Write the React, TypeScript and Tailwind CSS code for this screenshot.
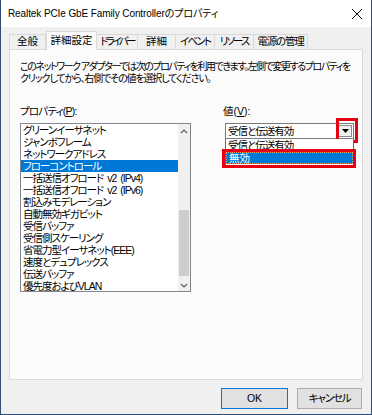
import React from "react";

const rows = [
  "グリーンイーサネット",
  "ジャンボフレーム",
  "ネットワークアドレス",
  "フローコントロール",
  "一括送信オフロード v2 (IPv4)",
  "一括送信オフロード v2 (IPv6)",
  "割込みモデレーション",
  "自動無効ギガビット",
  "受信バッファ",
  "受信側スケーリング",
  "省電力型イーサネット(EEE)",
  "速度とデュプレックス",
  "伝送バッファ",
  "優先度およびVLAN",
];

const tabs = [
  { label: "全般", w: "w-[37px]", t: "" },
  { label: "詳細設定", w: "w-[51px]", t: "", active: true },
  { label: "ドライバー", w: "w-[41px]", t: "tracking-[-2.6px]" },
  { label: "詳細", w: "w-[38px]", t: "" },
  { label: "イベント", w: "w-[39px]", t: "tracking-[-1.8px]" },
  { label: "リソース", w: "w-[39px]", t: "tracking-[-2px]" },
  { label: "電源の管理", w: "w-[54px]", t: "tracking-[-1.2px]" },
];

const font = "font-['Liberation_Sans','Noto_Sans_CJK_JP',sans-serif] [font-feature-settings:'palt']";

const App = () => {
  return (
    <div
      className={`w-[372px] h-[415px] bg-[#f0f0f0] border-x border-b border-[#2f4d74] flex flex-col text-[#000] ${font}`}
    >
      {/* title bar */}
      <div className="h-[27px] bg-white flex items-center justify-between pl-[7px] pr-[8px]">
        <span className="text-[10px] tracking-[-0.1px]">Realtek PCIe GbE Family Controllerのプロパティ</span>
        <svg width="12" height="12" viewBox="0 0 12 12">
          <path d="M1 1 L11 11 M11 1 L1 11" stroke="#111" strokeWidth="1" />
        </svg>
      </div>

      {/* tabs */}
      <div className="h-[22px] px-[8px] flex items-end">
        {tabs.map((t) =>
          t.active ? (
            <div
              key={t.label}
              className={`${t.w} h-[19px] -mb-px relative z-10 bg-[#fbfbfb] border-x border-t border-[#d9d9d9] flex items-center justify-center text-[10.5px]`}
            >
              {t.label}
            </div>
          ) : (
            <div
              key={t.label}
              className={`${t.w} ${t.t} h-[15px] border-t border-r first:border-l border-[#d9d9d9] flex items-center justify-center text-[10.5px] whitespace-nowrap`}
            >
              {t.label}
            </div>
          )
        )}
      </div>

      {/* panel */}
      <div className="mx-[8px] h-[331px] bg-[#fbfbfb] border border-[#d9d9d9] pl-[10px] pt-[11px]">
        <p className="text-[10px] leading-[12px] whitespace-nowrap">
          <span className="tracking-[-1.45px]">
            このネットワーク アダプターでは次のプロパティを利用できます。左側で変更するプロパティを
          </span>
          <br />
          <span className="tracking-[-1.15px]">クリックしてから、右側でその値を選択してください。</span>
        </p>

        <div className="mt-[20px] flex gap-[32px]">
          {/* left column */}
          <div className="w-[171px]">
            <div className="h-[12px] leading-[12px] text-[10.5px] tracking-[-0.8px]">
              プロパティ(<u>P</u>):
            </div>
            <div className="mt-[6px] h-[169px] bg-white border border-[#828790] flex">
              <div className="flex-1 flex flex-col">
                {rows.map((r, i) => (
                  <div
                    key={r}
                    className={`h-[12px] leading-[12px] pl-[2px] text-[10.5px] tracking-[-1px] [word-spacing:2px] whitespace-nowrap ${
                      i === 3 ? "bg-[#0078d7] text-white" : ""
                    }`}
                  >
                    {r}
                  </div>
                ))}
              </div>
              <div className="w-[12px] bg-[#f0f0f0] flex flex-col items-center">
                <div className="h-[14px] flex items-center">
                  <svg width="8" height="5" viewBox="0 0 8 5">
                    <path d="M1 4 L4 1 L7 4" fill="none" stroke="#606060" strokeWidth="1.2" />
                  </svg>
                </div>
                <div className="h-[72px]" />
                <div className="w-[10px] h-[66px] bg-[#cdcdcd]" />
                <div className="flex-1" />
                <div className="h-[12px] flex items-center">
                  <svg width="8" height="5" viewBox="0 0 8 5">
                    <path d="M1 1 L4 4 L7 1" fill="none" stroke="#606060" strokeWidth="1.2" />
                  </svg>
                </div>
              </div>
            </div>
          </div>

          {/* right column */}
          <div className="w-[134px]">
            <div className="h-[12px] leading-[12px] text-[10.5px]">
              値(<u>V</u>):
            </div>
            <div className="mt-[6px] ml-[2px] w-[129px] relative">
              <div className="h-[16px] bg-white border border-[#7a7a7a] flex items-center justify-between">
                <span className="pl-[2px] text-[10.5px] leading-[12px] tracking-[-1px]">受信と伝送有効</span>
                <div className="w-[14px] h-[12px] mr-[1px] bg-[#f0f0f0] border border-[#8a8a8a] flex items-center justify-center">
                  <svg width="7" height="4" viewBox="0 0 7 4">
                    <path d="M0 0 H7 L3.5 4 Z" fill="#000" />
                  </svg>
                </div>
              </div>
              {/* red mark around arrow */}
              <div className="absolute left-[111px] top-[-5px] w-[22px] h-[25px] border-[3px] border-[#e60012]" />

              {/* open drop list */}
              <div className="absolute left-0 top-[16px] w-[129px] h-[27px] bg-white border-x border-b border-[#646464] overflow-hidden">
                <div className="h-[12px] leading-[12px] pl-[2px] text-[10.5px] tracking-[-1px]">受信と伝送有効</div>
                <div className="h-[12px] leading-[10px] mt-[1px] pl-[2px] text-[10.5px] bg-[#0078d7] text-white border border-dotted border-[#e0a060]">
                  無効
                </div>
              </div>
              <div className="absolute left-[-3px] top-[26px] w-[134px] h-[19px] border-[3px] border-[#e60012]" />
            </div>
          </div>
        </div>
      </div>

      {/* buttons */}
      <div className="mt-[8px] flex justify-end gap-[9px] pr-[9px]">
        <button className="w-[67px] h-[21px] bg-[#e1e1e1] border border-[#0078d7] text-[10.5px]">OK</button>
        <button className="w-[65px] h-[21px] bg-[#e1e1e1] border border-[#adadad] text-[10.5px] tracking-[-1.2px]">
          キャンセル
        </button>
      </div>
    </div>
  );
};

export default App;
